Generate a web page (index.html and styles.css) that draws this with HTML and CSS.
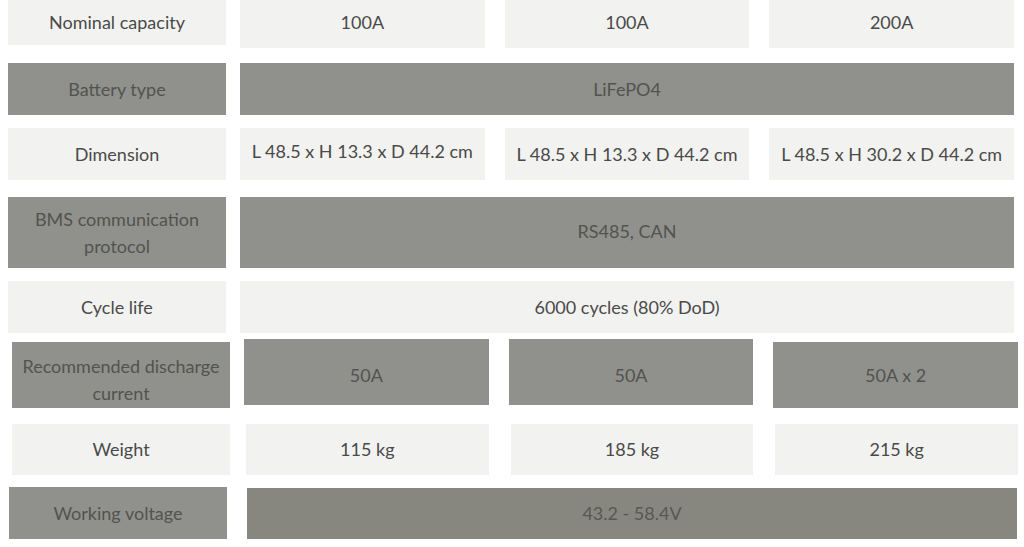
FILE: index.html
```html
<!DOCTYPE html>
<html lang="en">
<head>
<meta charset="utf-8">
<title>Battery specifications</title>
<link rel="stylesheet" href="styles.css">
</head>
<body>
<div class="spec">
  <div class="row r1">
    <div class="cell label light">Nominal capacity</div>
    <div class="cell light">100A</div>
    <div class="cell light">100A</div>
    <div class="cell light">200A</div>
  </div>
  <div class="row r2">
    <div class="cell label dark">Battery type</div>
    <div class="cell dark span3">LiFePO4</div>
  </div>
  <div class="row r3">
    <div class="cell label light">Dimension</div>
    <div class="cell light up">L 48.5 x H 13.3 x D 44.2 cm</div>
    <div class="cell light">L 48.5 x H 13.3 x D 44.2 cm</div>
    <div class="cell light">L 48.5 x H 30.2 x D 44.2 cm</div>
  </div>
  <div class="row r4">
    <div class="cell label dark">BMS communication<br>protocol</div>
    <div class="cell dark span3">RS485, CAN</div>
  </div>
  <div class="row r5">
    <div class="cell label light">Cycle life</div>
    <div class="cell light span3">6000 cycles (80% DoD)</div>
  </div>
  <div class="row r6">
    <div class="cell label dark low">Recommended discharge<br>current</div>
    <div class="cell dark high">50A</div>
    <div class="cell dark high">50A</div>
    <div class="cell dark low">50A x 2</div>
  </div>
  <div class="row r7">
    <div class="cell label light">Weight</div>
    <div class="cell light">115 kg</div>
    <div class="cell light">185 kg</div>
    <div class="cell light">215 kg</div>
  </div>
  <div class="row r8">
    <div class="cell label dark">Working voltage</div>
    <div class="cell darker span3">43.2 - 58.4V</div>
  </div>
</div>
</body>
</html>
```
FILE: styles.css
```css
html, body {
  margin: 0;
  padding: 0;
  background: #ffffff;
}

body {
  font-family: "Lato", "Open Sans", sans-serif;
  font-size: 18px;
  color: #4a4a48;
  overflow: hidden;
}

.spec {
  display: flex;
  flex-direction: column;
  margin-top: -4px;
  padding-left: 8px;
  width: 1006px;
}

.row {
  display: grid;
  grid-template-columns: 212px 1fr 1fr 1fr;
  column-gap: 20px;
  height: 52px;
}

.label {
  width: 218px;
}

.cell {
  display: flex;
  align-items: center;
  justify-content: center;
  text-align: center;
  line-height: 27px;
  box-sizing: border-box;
}

.span3 {
  grid-column: 2 / 5;
}

.light {
  background: #f2f2f1;
  color: #4a4a48;
}

.dark {
  background: #90918c;
  color: #525350;
}

.darker {
  background: #878780;
  color: #585853;
}

.r1 { margin-bottom: 15px; }
.r1 .label { height: 49px; padding-top: 3px; }
.r2 { margin-bottom: 13px; }
.r3 { margin-bottom: 17px; }
.r3 .up { padding-bottom: 5px; }
.r4 { height: 71px; margin-bottom: 13px; }
.r4 .span3 { padding-bottom: 3px; }
.r5 { margin-bottom: 6px; }

.r6 {
  height: 69px;
  margin-bottom: 16px;
  margin-left: 4px;
  margin-right: -4px;
}
.r6 .high { height: 66px; padding-top: 6px; }
.r6 .low { margin-top: 3px; height: 66px; }
.r6 .label { padding-top: 10px; }

.r7 {
  height: 51px;
  margin-bottom: 12px;
  margin-left: 4px;
  margin-right: -4px;
  column-gap: 22px;
}

.r8 { height: 52px; margin-left: 1px; }
.r8 .span3 { margin-left: 6px; margin-right: -3px; margin-top: 1px; }
```
